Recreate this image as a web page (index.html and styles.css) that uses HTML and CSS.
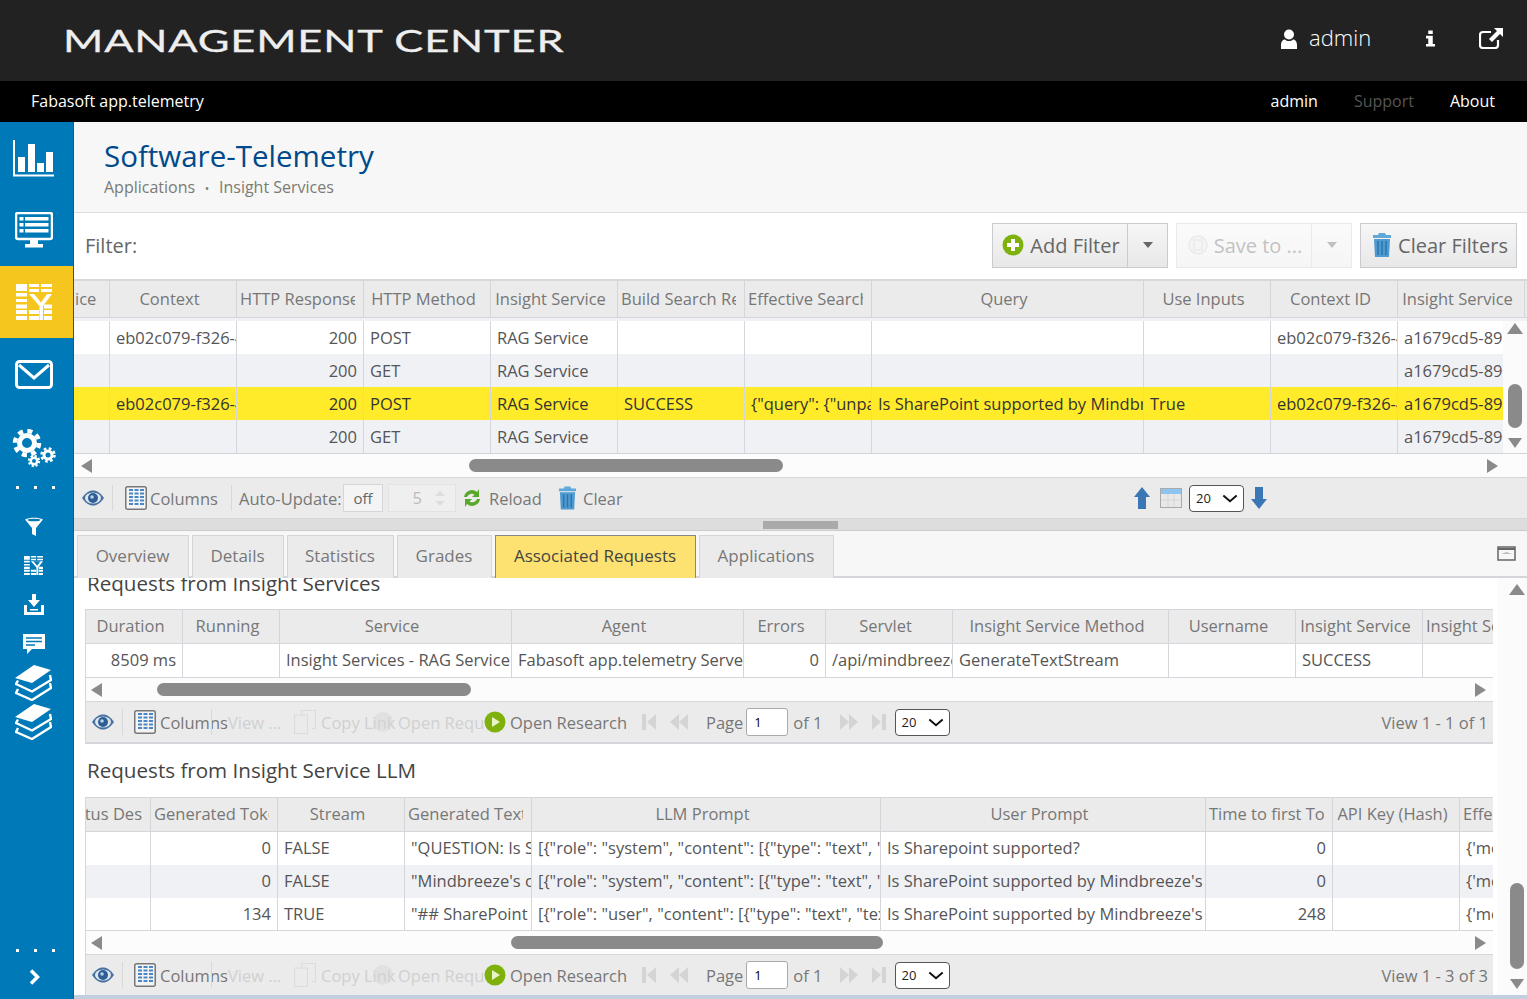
FILE: index.html
```html
<!DOCTYPE html>
<html lang="en">

<head>
    <meta charset="UTF-8">
    <title>Management Center</title>
    <link rel="stylesheet" href="styles.css">
</head>

<body>

    <!-- shared icons -->
    <svg class="defs" width="0" height="0">
        <symbol id="i-eye" viewBox="0 0 22 16">
            <path d="M0 8C4 2 8 .5 11 .5S18 2 22 8c-4 6-8 7.500-11 7.500S4 14 0 8z" fill="#46719f" />
            <ellipse cx="11" cy="8" rx="8" ry="5.500" fill="#dfe6ee" />
            <circle cx="11" cy="8" r="5" fill="#2d5f96" />
            <circle cx="10" cy="7" r="1.800" fill="#b9d2ea" />
        </symbol>
        <symbol id="i-columns" viewBox="0 0 22 24">
            <rect x=".75" y=".75" width="20.500" height="22.500" rx="2" fill="#f4f4f4" stroke="#777" stroke-width="1.500" />
            <path d="M4 4h4M4 7.500h4M4 11h4M4 14.500h4M4 18h4M9.500 4h4M9.500 7.500h4M9.500 11h4M9.500 14.500h4M9.500 18h4M15 4h4M15 7.500h4M15 11h4M15 14.500h4M15 18h4" stroke="#4a86c5" stroke-width="2.200" />
        </symbol>
        <symbol id="i-trash" viewBox="0 0 20 24">
            <path d="M7 0h6l1 2h5v3H1V2h5z" fill="#5fa8d8" />
            <path d="M2 6h16l-1 18H3z" fill="#4f9ad0" />
            <path d="M6 8v14M10 8v14M14 8v14" stroke="#2c76ad" stroke-width="1.500" />
        </symbol>
        <symbol id="i-copy" viewBox="0 0 22 24">
            <path d="M7.500 4V.5h14v18H18M.5 5h13v18.500H.5z" fill="none" stroke="#dcdcdc" stroke-width="1.200" />
        </symbol>
        <symbol id="i-play" viewBox="0 0 22 22">
            <circle cx="11" cy="11" r="10.500" fill="#7fb10d" />
            <path d="M8 6l8 5-8 5z" fill="#e8f3c8" />
        </symbol>
        <symbol id="i-first" viewBox="0 0 14 16">
            <path d="M0 0h4v16H0zM14 0v16L5 8z" fill="#d4d4d4" />
        </symbol>
        <symbol id="i-prev" viewBox="0 0 18 16">
            <path d="M9 0v16L0 8zM18 0v16L9 8z" fill="#d4d4d4" />
        </symbol>
        <symbol id="i-next" viewBox="0 0 18 16">
            <path d="M0 0v16l9-8zM9 0v16l9-8z" fill="#d4d4d4" />
        </symbol>
        <symbol id="i-last" viewBox="0 0 14 16">
            <path d="M0 0v16l9-8zM10 0h4v16h-4z" fill="#d4d4d4" />
        </symbol>
        <symbol id="i-stack" viewBox="0 0 37 36">
            <path d="M0 13L19 0l17 5L17 18z" fill="#fff" />
            <path d="M3 15.500L1 19l16 7.500L36 15l-1-5M3 24l-2 4 16 7 19-12-1-5" fill="none" stroke="#fff" stroke-width="2.400" stroke-linejoin="round" />
        </symbol>
        <symbol id="i-grid" viewBox="0 0 36 36">
            <path fill="#fff" d="M0 0h11v7H0zM13 0h10v3H13zM25 0h11v3H25zM13 5h10v3H13zM25 5h11v3H25zM0 9h11v3.500H0zM0 15h11v3H0zM0 20.500h11v4H0zM0 26h11v4H0zM0 32h11v4H0zM13 26h10v4H13zM13 32h10v4H13zM28 20.500h8v4h-8zM28 26h8v4h-8zM28 32h8v4h-8z" />
            <path fill="#fff" d="M13 10h23L27 22v14h-3.500V22z" />
            <path fill="currentColor" d="M18 10h13l-6 8.500z" />
        </symbol>
        <symbol id="i-chevron" viewBox="0 0 18 10">
            <path d="M1.500 1.500L9 8l7.500-6.500" fill="none" stroke="#111" stroke-width="2.200" />
        </symbol>
    </svg>

    <header class="topbar">
        <div class="logo">MANAGEMENT CENTER</div>
        <div class="top-user">
            <svg class="ic-user" viewBox="0 0 16 20">
                <circle cx="8" cy="5.500" r="5" fill="#fff" />
                <path d="M0 20v-4c0-3.500 2-5.500 4-5.500 1 1 2.500 1.500 4 1.500s3-.5 4-1.500c2 0 4 2 4 5.500v4z" fill="#fff" />
            </svg>
            <span class="top-name">admin</span>
            <svg class="ic-info" viewBox="0 0 10 18">
                <path d="M2.500 0h5v4h-5zM0 6h7.500v9H10v3H0v-3h2.500V9H0z" fill="#fff" />
            </svg>
            <svg class="ic-ext" viewBox="0 0 24 21">
                <path d="M19 12v5a3 3 0 0 1-3 3H4a3 3 0 0 1-3-3V7a3 3 0 0 1 3-3h8" fill="none" stroke="#fff" stroke-width="2.200" />
                <path d="M15 0h9v9l-3-3-8 8-3-3 8-8z" fill="#fff" />
            </svg>
        </div>
    </header>

    <nav class="navbar">
        <span class="nav-brand">Fabasoft app.telemetry</span>
        <div class="nav-links">
            <a>admin</a>
            <a class="muted">Support</a>
            <a>About</a>
        </div>
    </nav>

    <div class="layout">
        <aside class="sidebar">
            <div class="side-big">
                <svg width="42" height="37" viewBox="0 0 42 37">
                    <path d="M1 0v35.500h40" fill="none" stroke="#fff" stroke-width="2" />
                    <path d="M5 17h7v15H5zM15 4h7v28h-7zM24 23h7v9h-7zM33 12h7v20h-7z" fill="#fff" />
                </svg>
            </div>
            <div class="side-big">
                <svg width="38" height="36" viewBox="0 0 38 36">
                    <rect x="1" y="1" width="36" height="26" rx="2" fill="none" stroke="#fff" stroke-width="2.500" />
                    <path d="M4.500 5h4v3.500h-4zM10 5h23.500v3.500H10zM4.500 11h4v3.500h-4zM10 11h23.500v3.500H10zM4.500 17h4v3.500h-4zM10 17h23.500v3.500H10zM15 28h8v4h-8zM10 32h18v3.500H10z" fill="#fff" />
                </svg>
            </div>
            <div class="side-big active">
                <svg width="36" height="36"><use href="#i-grid" /></svg>
            </div>
            <div class="side-big">
                <svg width="38" height="29" viewBox="0 0 38 29">
                    <rect x="1.500" y="1.500" width="35" height="26" rx="3" fill="none" stroke="#fff" stroke-width="3" />
                    <path d="M4 5l15 13L34 5" fill="none" stroke="#fff" stroke-width="3" />
                </svg>
            </div>
            <div class="side-big side-gears">
                <svg width="46" height="42" viewBox="0 0 46 42">
                    <circle cx="15" cy="15" r="7.500" fill="none" stroke="#fff" stroke-width="5" />
                    <circle cx="15" cy="15" r="12" fill="none" stroke="#fff" stroke-width="4.500" stroke-dasharray="5 4.425" />
                    <circle cx="36" cy="27" r="4" fill="none" stroke="#fff" stroke-width="3" />
                    <circle cx="36" cy="27" r="6.500" fill="none" stroke="#fff" stroke-width="2.500" stroke-dasharray="2.700 2.400" />
                    <circle cx="22" cy="33" r="3.250" fill="none" stroke="#fff" stroke-width="2.500" />
                    <circle cx="22" cy="33" r="5.200" fill="none" stroke="#fff" stroke-width="2" stroke-dasharray="2.200 1.880" />
                </svg>
            </div>
            <div class="side-dots top"><i></i><i></i><i></i></div>
            <div class="side-small first">
                <svg width="20" height="20" viewBox="0 0 20 20">
                    <path d="M1 2.500C5 0 15 0 19 2.500L12 11v8l-4-2v-6z" fill="#fff" />
                    <ellipse cx="10" cy="3" rx="6.500" ry="1.300" fill="#0079b8" />
                </svg>
            </div>
            <div class="side-small side-grid">
                <svg width="19" height="19"><use href="#i-grid" /></svg>
            </div>
            <div class="side-small">
                <svg width="20" height="21" viewBox="0 0 20 21">
                    <path d="M8 0h4v6h4l-6 7-6-7h4z" fill="#fff" />
                    <path d="M0 11h3v7h14v-7h3v10H0z" fill="#fff" />
                    <path d="M6 15h8v1.500H6z" fill="#fff" />
                </svg>
            </div>
            <div class="side-small">
                <svg width="22" height="20" viewBox="0 0 22 20">
                    <path d="M0 0h22v15H9l-5 5v-5H0z" fill="#fff" />
                    <path d="M3 4h16M3 7.500h16M3 11h9" stroke="#0079b8" stroke-width="1.500" />
                </svg>
            </div>
            <div class="side-small">
                <svg width="37" height="36"><use href="#i-stack" /></svg>
            </div>
            <div class="side-small">
                <svg width="37" height="36"><use href="#i-stack" /></svg>
            </div>
            <div class="side-bottom">
                <div class="side-dots"><i></i><i></i><i></i></div>
                <svg class="side-chevron" width="12" height="16" viewBox="0 0 12 16">
                    <path d="M2 1.500L8.500 8 2 14.500" fill="none" stroke="#fff" stroke-width="3.500" />
                </svg>
            </div>
        </aside>

        <main class="main">
            <div class="page-head">
                <h1>Software-Telemetry</h1>
                <div class="crumbs">Applications <span class="sep">•</span> Insight Services</div>
            </div>

            <div class="filter-bar">
                <span class="filter-label">Filter:</span>
                <div class="btn-group add">
                    <button class="btn btn-main">
                        <svg width="22" height="22" viewBox="0 0 22 22">
                            <circle cx="11" cy="11" r="10.500" fill="#7fb10d" />
                            <path d="M9 5h4v4h4v4h-4v4H9v-4H5V9h4z" fill="#fff" />
                        </svg>
                        Add Filter
                    </button>
                    <button class="btn btn-caret"><i class="caret"></i></button>
                </div>
                <div class="btn-group save">
                    <button class="btn btn-main">
                        <svg width="20" height="20" viewBox="0 0 20 20">
                            <circle cx="10" cy="10" r="9" fill="#e8e8e8" stroke="#ccc" stroke-width="1.500" />
                            <path d="M6 5h8v10H6z" fill="none" stroke="#ccc" stroke-width="1.500" />
                        </svg>
                        Save to ...
                    </button>
                    <button class="btn btn-caret"><i class="caret"></i></button>
                </div>
                <div class="btn-group clear">
                    <button class="btn btn-main">
                        <svg width="20" height="24"><use href="#i-trash" /></svg>
                        Clear Filters
                    </button>
                </div>
            </div>

            <section class="grid grid-main">
                <div class="row head cols-main">
                    <div class="cell cut-left">ice</div>
                    <div class="cell">Context</div>
                    <div class="cell">HTTP Response Code</div>
                    <div class="cell">HTTP Method</div>
                    <div class="cell">Insight Service</div>
                    <div class="cell">Build Search Result</div>
                    <div class="cell">Effective Search Query</div>
                    <div class="cell">Query</div>
                    <div class="cell">Use Inputs</div>
                    <div class="cell">Context ID</div>
                    <div class="cell">Insight Service</div>
                </div>
                <div class="head-gap"></div>
                <div class="grid-body">
                    <div class="rows">
                        <div class="row cols-main">
                            <div class="cell"></div>
                            <div class="cell">eb02c079-f326-4a1b</div>
                            <div class="cell num">200</div>
                            <div class="cell">POST</div>
                            <div class="cell">RAG Service</div>
                            <div class="cell"></div>
                            <div class="cell"></div>
                            <div class="cell"></div>
                            <div class="cell"></div>
                            <div class="cell">eb02c079-f326-4a1b</div>
                            <div class="cell">a1679cd5-8921-44</div>
                        </div>
                        <div class="row alt cols-main">
                            <div class="cell"></div>
                            <div class="cell"></div>
                            <div class="cell num">200</div>
                            <div class="cell">GET</div>
                            <div class="cell">RAG Service</div>
                            <div class="cell"></div>
                            <div class="cell"></div>
                            <div class="cell"></div>
                            <div class="cell"></div>
                            <div class="cell"></div>
                            <div class="cell">a1679cd5-8921-44</div>
                        </div>
                        <div class="row selected cols-main">
                            <div class="cell"></div>
                            <div class="cell">eb02c079-f326-4a1b</div>
                            <div class="cell num">200</div>
                            <div class="cell">POST</div>
                            <div class="cell">RAG Service</div>
                            <div class="cell">SUCCESS</div>
                            <div class="cell">{"query": {"unparsed"</div>
                            <div class="cell">Is SharePoint supported by Mindbreeze's</div>
                            <div class="cell">True</div>
                            <div class="cell">eb02c079-f326-4a1b</div>
                            <div class="cell">a1679cd5-8921-44</div>
                        </div>
                        <div class="row alt cols-main">
                            <div class="cell"></div>
                            <div class="cell"></div>
                            <div class="cell num">200</div>
                            <div class="cell">GET</div>
                            <div class="cell">RAG Service</div>
                            <div class="cell"></div>
                            <div class="cell"></div>
                            <div class="cell"></div>
                            <div class="cell"></div>
                            <div class="cell"></div>
                            <div class="cell">a1679cd5-8921-44</div>
                        </div>
                    </div>
                    <div class="vscroll">
                        <i class="arrow-up"></i>
                        <i class="vthumb"></i>
                        <i class="arrow-down"></i>
                    </div>
                </div>
                <div class="hscroll">
                    <i class="arrow-left"></i>
                    <i class="hthumb"></i>
                    <i class="arrow-right"></i>
                </div>
                <div class="toolbar">
                    <svg class="tb-eye" width="22" height="16"><use href="#i-eye" /></svg>
                    <i class="tb-sep"></i>
                    <svg class="tb-cols" width="22" height="24"><use href="#i-columns" /></svg>
                    <span class="tb-text tb-colname">Columns</span>
                    <i class="tb-sep sep-auto"></i>
                    <span class="tb-text tb-auto">Auto-Update:</span>
                    <span class="off-box">off</span>
                    <span class="spin-box"><span class="spin-val">5</span><span class="spin-btns"><i class="spin-up"></i><i class="spin-down"></i></span></span>
                    <svg class="tb-reload" width="20" height="20" viewBox="0 0 20 20">
                        <path d="M2 9a8 8 0 0 1 13-5l2-3v8h-7l2.500-2.500A5 5 0 0 0 5 9z" fill="#58a82a" />
                        <path d="M18 11a8 8 0 0 1-13 5l-2 3v-8h7l-2.500 2.500A5 5 0 0 0 15 11z" fill="#58a82a" />
                    </svg>
                    <span class="tb-text tb-rel">Reload</span>
                    <svg class="tb-trash" width="19" height="24"><use href="#i-trash" /></svg>
                    <span class="tb-text tb-clear">Clear</span>
                    <svg class="tb-up" width="16" height="22" viewBox="0 0 16 22">
                        <path d="M8 0l8 10h-4v12H4V10H0z" fill="#3b77b5" />
                    </svg>
                    <svg class="tb-cal" width="22" height="20" viewBox="0 0 22 20">
                        <rect x=".5" y=".5" width="21" height="19" fill="#e8e8e8" stroke="#aaa" />
                        <rect x="1" y="1" width="20" height="5" fill="#8ec4f0" />
                        <path d="M8 6v13M14 6v13M1 12h20" stroke="#d6d6d6" />
                    </svg>
                    <div class="page-size"><span>20</span><svg width="16" height="9"><use href="#i-chevron" /></svg></div>
                    <svg class="tb-down" width="16" height="22" viewBox="0 0 16 22">
                        <path d="M4 0h8v12h4L8 22 0 12h4z" fill="#3b77b5" />
                    </svg>
                </div>
            </section>

            <div class="splitter"><i></i></div>

            <div class="tabs">
                <a class="tab t-over">Overview</a>
                <a class="tab t-det">Details</a>
                <a class="tab t-stat">Statistics</a>
                <a class="tab t-grad">Grades</a>
                <a class="tab t-assoc active">Associated Requests</a>
                <a class="tab t-apps">Applications</a>
                <svg class="tabs-max" width="19" height="15" viewBox="0 0 19 15">
                    <rect x="1" y="1" width="17" height="13" fill="#f7f7f7" stroke="#666" stroke-width="1.500" />
                    <path d="M1 2h17v2H1z" fill="#666" />
                    <path d="M4 8l5.500-2L15 8z" fill="#bbb" />
                </svg>
            </div>

            <div class="panel">
                <div class="panel-content">
                    <h2 class="sec-title first">Requests from Insight Services</h2>
                    <section class="grid grid-sub">
                        <div class="row head cols-req">
                            <div class="cell">Duration</div>
                            <div class="cell">Running</div>
                            <div class="cell">Service</div>
                            <div class="cell">Agent</div>
                            <div class="cell">Errors</div>
                            <div class="cell">Servlet</div>
                            <div class="cell">Insight Service Method</div>
                            <div class="cell">Username</div>
                            <div class="cell">Insight Service</div>
                            <div class="cell left">Insight Service Version</div>
                        </div>
                        <div class="row last cols-req">
                            <div class="cell num">8509 ms</div>
                            <div class="cell"></div>
                            <div class="cell">Insight Services - RAG Service</div>
                            <div class="cell">Fabasoft app.telemetry Server</div>
                            <div class="cell num">0</div>
                            <div class="cell">/api/mindbreeze/rag</div>
                            <div class="cell">GenerateTextStream</div>
                            <div class="cell"></div>
                            <div class="cell">SUCCESS</div>
                            <div class="cell"></div>
                        </div>
                        <div class="hscroll">
                            <i class="arrow-left"></i>
                            <i class="hthumb thumb-req"></i>
                            <i class="arrow-right"></i>
                        </div>
                        <div class="toolbar pager">
                            <svg class="tb-eye" width="22" height="16"><use href="#i-eye" /></svg>
                            <i class="tb-sep"></i>
                            <svg class="tb-cols" width="22" height="24"><use href="#i-columns" /></svg>
                            <span class="tb-text w-columns">Columns</span>
                            <i class="tb-sep sep-ghost"></i>
                            <span class="tb-text dis w-view">View ...</span>
                            <svg class="pg-copy" width="22" height="24"><use href="#i-copy" /></svg>
                            <span class="tb-text dis w-copy">Copy Link</span>
                            <i class="pg-ghost"></i>
                            <span class="tb-text dis w-open">Open Requ</span>
                            <svg class="pg-play" width="22" height="22"><use href="#i-play" /></svg>
                            <span class="tb-text w-research">Open Research</span>
                            <svg class="pg-first" width="14" height="16"><use href="#i-first" /></svg>
                            <svg class="pg-prev" width="18" height="16"><use href="#i-prev" /></svg>
                            <span class="tb-text pg-page">Page</span>
                            <input class="pg-input" type="text" value="1">
                            <span class="tb-text">of 1</span>
                            <svg class="pg-next" width="18" height="16"><use href="#i-next" /></svg>
                            <svg class="pg-last" width="14" height="16"><use href="#i-last" /></svg>
                            <div class="page-size pg-size"><span>20</span><svg width="16" height="9"><use href="#i-chevron" /></svg></div>
                            <span class="tb-text pg-view">View 1 - 1 of 1</span>
                        </div>
                    </section>

                    <h2 class="sec-title">Requests from Insight Service LLM</h2>
                    <section class="grid grid-sub">
                        <div class="row head cols-llm">
                            <div class="cell clip-right">Status Des</div>
                            <div class="cell">Generated Tokens</div>
                            <div class="cell">Stream</div>
                            <div class="cell">Generated Text</div>
                            <div class="cell">LLM Prompt</div>
                            <div class="cell">User Prompt</div>
                            <div class="cell">Time to first Token</div>
                            <div class="cell">API Key (Hash)</div>
                            <div class="cell left">Effective</div>
                        </div>
                        <div class="row cols-llm">
                            <div class="cell"></div>
                            <div class="cell num">0</div>
                            <div class="cell">FALSE</div>
                            <div class="cell">"QUESTION: Is SharePoint</div>
                            <div class="cell">[{"role": "system", "content": [{"type": "text", "text"</div>
                            <div class="cell">Is Sharepoint supported?</div>
                            <div class="cell num">0</div>
                            <div class="cell"></div>
                            <div class="cell">{'model'</div>
                        </div>
                        <div class="row alt cols-llm">
                            <div class="cell"></div>
                            <div class="cell num">0</div>
                            <div class="cell">FALSE</div>
                            <div class="cell">"Mindbreeze's connector</div>
                            <div class="cell">[{"role": "system", "content": [{"type": "text", "text"</div>
                            <div class="cell">Is SharePoint supported by Mindbreeze's</div>
                            <div class="cell num">0</div>
                            <div class="cell"></div>
                            <div class="cell">{'model'</div>
                        </div>
                        <div class="row last cols-llm">
                            <div class="cell"></div>
                            <div class="cell num">134</div>
                            <div class="cell">TRUE</div>
                            <div class="cell">"## SharePoint</div>
                            <div class="cell">[{"role": "user", "content": [{"type": "text", "text"</div>
                            <div class="cell">Is SharePoint supported by Mindbreeze's</div>
                            <div class="cell num">248</div>
                            <div class="cell"></div>
                            <div class="cell">{'model'</div>
                        </div>
                        <div class="hscroll">
                            <i class="arrow-left"></i>
                            <i class="hthumb thumb-llm"></i>
                            <i class="arrow-right"></i>
                        </div>
                        <div class="toolbar pager">
                            <svg class="tb-eye" width="22" height="16"><use href="#i-eye" /></svg>
                            <i class="tb-sep"></i>
                            <svg class="tb-cols" width="22" height="24"><use href="#i-columns" /></svg>
                            <span class="tb-text w-columns">Columns</span>
                            <i class="tb-sep sep-ghost"></i>
                            <span class="tb-text dis w-view">View ...</span>
                            <svg class="pg-copy" width="22" height="24"><use href="#i-copy" /></svg>
                            <span class="tb-text dis w-copy">Copy Link</span>
                            <i class="pg-ghost"></i>
                            <span class="tb-text dis w-open">Open Requ</span>
                            <svg class="pg-play" width="22" height="22"><use href="#i-play" /></svg>
                            <span class="tb-text w-research">Open Research</span>
                            <svg class="pg-first" width="14" height="16"><use href="#i-first" /></svg>
                            <svg class="pg-prev" width="18" height="16"><use href="#i-prev" /></svg>
                            <span class="tb-text pg-page">Page</span>
                            <input class="pg-input" type="text" value="1">
                            <span class="tb-text">of 1</span>
                            <svg class="pg-next" width="18" height="16"><use href="#i-next" /></svg>
                            <svg class="pg-last" width="14" height="16"><use href="#i-last" /></svg>
                            <div class="page-size pg-size"><span>20</span><svg width="16" height="9"><use href="#i-chevron" /></svg></div>
                            <span class="tb-text pg-view">View 1 - 3 of 3</span>
                        </div>
                    </section>
                </div>
                <div class="vscroll panel-scroll">
                    <i class="arrow-up"></i>
                    <i class="vthumb"></i>
                    <i class="arrow-down"></i>
                </div>
            </div>
            <div class="bottom-strip"></div>
        </main>
    </div>

</body>

</html>
```

FILE: styles.css
```css
/* Global Styles */
* {
    box-sizing: border-box;
}

body {
    margin: 0;
    height: 999px;
    overflow: hidden;
    font-family: 'Open Sans', sans-serif;
    font-size: 16.5px;
    color: #555;
    background-color: #fff;
}

.defs {
    display: block;
    height: 0;
}

i {
    display: block;
}

/* Top bars */
.topbar {
    height: 81px;
    background-color: #222;
    display: flex;
    align-items: center;
    justify-content: space-between;
    color: #fff;
}

.logo {
    margin-left: 63px;
    font-family: 'Lato', sans-serif;
    font-size: 31px;
    line-height: 1;
    letter-spacing: 0.6px;
    white-space: nowrap;
    transform: scaleX(1.4);
    transform-origin: left center;
    color: #eee;
    -webkit-text-stroke: 0.3px #eee;
}

.top-user {
    display: flex;
    align-items: center;
    margin-bottom: 4px;
}

.ic-user {
    width: 16px;
    height: 20px;
    margin-right: 12px;
    margin-left: 1px;
}

.top-name {
    font-size: 22px;
    font-weight: 300;
    width: 62px;
    line-height: 30px;
    margin-top: -4px;
}

.ic-info {
    width: 9px;
    height: 17px;
    margin-left: 55px;
}

.ic-ext {
    width: 24px;
    height: 21px;
    margin-left: 44px;
    margin-right: 24px;
}

.navbar {
    height: 41px;
    background-color: #000;
    color: #fff;
    display: flex;
    align-items: center;
    justify-content: space-between;
    padding: 0 32px 2px 31px;
    font-size: 16px;
}

.nav-links {
    display: flex;
    gap: 36px;
}

.nav-links .muted {
    color: #555;
}

/* Sidebar */
.layout {
    display: flex;
    height: 877px;
}

.sidebar {
    width: 74px;
    flex: none;
    background-color: #0079b8;
    border-right: 1px solid #0a5d8c;
    display: flex;
    flex-direction: column;
    color: #0079b8;
}

.side-big {
    height: 72px;
    flex: none;
    display: flex;
    align-items: center;
    justify-content: center;
    padding-right: 6px;
}

.side-big.active {
    background-color: #f5c71e;
    color: #f5c71e;
}

.side-gears {
    padding-top: 6px;
    padding-right: 3px;
}

.side-dots {
    display: flex;
    justify-content: center;
    gap: 15px;
    padding-right: 2px;
}

.side-dots.top {
    margin-top: 4px;
}

.side-dots i {
    width: 3px;
    height: 3px;
    background-color: #fff;
}

.side-small {
    height: 39px;
    flex: none;
    display: flex;
    align-items: center;
    justify-content: center;
    padding-right: 6px;
}

.side-small.first {
    margin-top: 18px;
}

.side-bottom {
    margin-top: auto;
    padding-bottom: 14px;
    display: flex;
    flex-direction: column;
    align-items: center;
}

.side-chevron {
    margin-top: 17px;
    margin-right: 4px;
}

/* Page head */
.main {
    flex: 1;
    min-width: 0;
    display: flex;
    flex-direction: column;
}

.page-head {
    height: 91px;
    background-color: #f7f7f7;
    border-bottom: 1px solid #ddd;
    padding: 12px 0 0 30px;
}

.page-head h1 {
    margin: 0;
    font-size: 29.5px;
    font-weight: 400;
    line-height: 44px;
    color: #00498a;
}

.crumbs {
    font-size: 16px;
    line-height: 18px;
    color: #7b7b73;
}

.crumbs .sep {
    font-size: 12px;
    margin: 0 5.500px;
}

/* Filter row */
.filter-bar {
    height: 66px;
    display: flex;
    align-items: center;
    padding: 0 10px 0 11px;
    gap: 8px;
}

.filter-label {
    font-size: 20px;
    line-height: 26px;
    margin-bottom: 1px;
    color: #666;
    margin-right: auto;
}

.btn-group {
    display: flex;
    height: 45px;
    margin-top: -2px;
}

.btn {
    font-family: inherit;
    font-size: 20px;
    color: #666;
    white-space: nowrap;
    border: 1px solid #c9cbd0;
    background: linear-gradient(#f6f6f6, #e8e8e8);
    display: flex;
    align-items: center;
    justify-content: center;
    gap: 6px;
    padding: 0;
}

.btn-main {
    width: 136px;
    padding-left: 2px;
}

.btn-caret {
    width: 40px;
    border-left: 0;
}

.save .btn {
    opacity: 0.4;
}

.clear .btn-main {
    width: 157px;
    padding-left: 3px;
}

.caret {
    width: 0;
    height: 0;
    border-left: 5.500px solid transparent;
    border-right: 5.500px solid transparent;
    border-top: 6px solid #666;
}

/* Grids */
.grid {
    overflow: hidden;
}

.grid-main {
    border-top: 2px solid #d8d8d8;
}

.grid-sub {
    width: 1408px;
    border: 1px solid #d5d6dc;
    border-right: 0;
}

.row {
    display: grid;
    height: 33px;
    line-height: 32px;
    white-space: nowrap;
}

.cols-main {
    grid-template-columns: 36px 127px 127px 127px 127px 127px 127px 272px 127px 127px 127px;
}

.cols-req {
    grid-template-columns: 97px 97px 232px 232px 82px 127px 216px 127px 127px 127px;
}

.cols-llm {
    grid-template-columns: 65px 127px 127px 127px 349px 325px 127px 127px 127px;
}

.cell {
    overflow: hidden;
    border-right: 1px solid #d5d6dc;
    padding: 0 6px;
    color: #555;
}

.cell.num {
    text-align: right;
}

.row.head {
    height: 34px;
    background-color: #ebebeb;
    border-bottom: 1px solid #d5d6dc;
}

.grid-main .row.head {
    height: 37px;
    line-height: 36px;
}

/* wide right border so long titles are cut before the column line */
.row.head .cell {
    text-align: center;
    padding: 0 2px 0 3px;
    color: #777;
    border-right: 9px solid #ebebeb;
    border-image: linear-gradient(to left, #d5d6dc 1px, #ebebeb 1px) 0 9 0 0;
}

.row.head .cell.left {
    text-align: left;
}

.row.head .cell.cut-left {
    text-align: left;
    padding: 0 0 0 1px;
}

.row.head .cell.clip-right {
    direction: rtl;
    text-align: right;
    padding: 0;
}

.row.alt {
    background-color: #f0f1f5;
}

.row.selected {
    background-color: #ffeb2a;
}

.row.selected .cell {
    color: #333;
}

.row.last {
    height: 34px;
    border-bottom: 1px solid #d5d6dc;
}

.row.last.cols-llm {
    height: 33px;
}

.head-gap {
    height: 3px;
    background-color: #f0f1f5;
}

.grid-body {
    display: flex;
    height: 133px;
    border-bottom: 1px solid #d5d6dc;
}

.rows {
    flex: 1;
    min-width: 0;
    overflow: hidden;
}

.rows .row {
    width: 1451px;
    line-height: 34px;
}

.vscroll {
    width: 24px;
    flex: none;
    background-color: #fbfbfb;
    display: flex;
    flex-direction: column;
    align-items: center;
    padding-top: 2px;
}

.vthumb {
    width: 14px;
    height: 44px;
    margin-top: 50px;
    background-color: #8a8a8a;
    border-radius: 7px;
}

.arrow-up,
.arrow-down,
.arrow-left,
.arrow-right {
    width: 0;
    height: 0;
    flex: none;
}

.arrow-up {
    border-left: 8px solid transparent;
    border-right: 8px solid transparent;
    border-bottom: 11px solid #8a8a8a;
}

.arrow-down {
    margin-top: 10px;
    border-left: 7px solid transparent;
    border-right: 7px solid transparent;
    border-top: 10px solid #8a8a8a;
}

.arrow-left {
    border-top: 7px solid transparent;
    border-bottom: 7px solid transparent;
    border-right: 11px solid #8a8a8a;
}

.arrow-right {
    margin-left: auto;
    border-top: 7px solid transparent;
    border-bottom: 7px solid transparent;
    border-left: 11px solid #8a8a8a;
}

.hscroll {
    height: 24px;
    background-color: #fcfcfc;
    border-bottom: 1px solid #d5d6dc;
    display: flex;
    align-items: center;
    padding: 0 29px 0 7px;
}

.hthumb {
    height: 13px;
    width: 314px;
    margin-left: 377px;
    background-color: #8a8a8a;
    border-radius: 7px;
}

.grid-sub .hscroll {
    padding: 0 7px 0 5px;
}

.thumb-req {
    margin-left: 55px;
}

.thumb-llm {
    width: 372px;
    margin-left: 409px;
}

/* Toolbars */
.toolbar {
    height: 41px;
    background-color: #ebebeb;
    border-bottom: 1px solid #d5d6dc;
    display: flex;
    align-items: center;
    padding-left: 8px;
    white-space: nowrap;
}

.toolbar svg {
    flex: none;
}

.tb-text {
    color: #777;
}

.tb-sep {
    width: 1px;
    height: 26px;
    margin: 0 12px 0 8px;
    background-color: #d8d8d8;
}

.tb-cols {
    margin-right: 4px;
}

.tb-colname {
    width: 69px;
    margin-left: -1px;
}

.sep-auto {
    margin: 0 7px 0 12px;
}

.tb-auto {
    width: 102px;
}

.off-box {
    width: 40px;
    height: 28px;
    margin-left: 2px;
    border: 1px solid #d5d6dc;
    background-color: #f4f4f4;
    text-align: center;
    line-height: 26px;
    font-size: 15px;
    color: #666;
}

.spin-box {
    width: 68px;
    height: 28px;
    margin-left: 5px;
    border: 1px solid #e2e2e2;
    display: flex;
    color: #bbb;
    background-color: #efefef;
}

.spin-val {
    width: 36px;
    text-align: right;
    line-height: 26px;
    padding-right: 3px;
}

.spin-btns {
    flex: 1;
    display: flex;
    flex-direction: column;
    align-items: center;
    justify-content: center;
    gap: 5px;
}

.spin-up,
.spin-down {
    width: 0;
    height: 0;
    border-left: 5px solid transparent;
    border-right: 5px solid transparent;
}

.spin-up {
    border-bottom: 5px solid #ddd;
}

.spin-down {
    border-top: 5px solid #ddd;
}

.tb-reload {
    margin: 0 7px 0 6px;
}

.tb-rel {
    width: 52px;
}

.tb-trash {
    margin: 0 6px 0 17px;
}

.tb-clear {
    width: 39px;
}

.tb-up {
    margin-left: 512px;
}

.tb-cal {
    margin: 0 7px 0 10px;
}

.page-size {
    width: 55px;
    height: 27px;
    flex: none;
    padding: 0 5px 0 6px;
    font-size: 13px;
    color: #222;
    background-color: #fff;
    border: 1px solid #555;
    border-radius: 4px;
    display: flex;
    align-items: center;
    justify-content: space-between;
}

.tb-down {
    margin-left: 7px;
}

.pager {
    padding-left: 6px;
}

.pager .tb-sep {
    margin-right: 11px;
}

.pager .tb-sep.sep-ghost {
    margin: 0 16px 0 0;
    flex: none;
}

.w-columns {
    width: 51px;
    flex: none;
}

.dis {
    color: #d0d0d0;
}

.w-view {
    width: 66px;
    flex: none;
}

.w-copy {
    width: 77px;
    flex: none;
}

.w-open {
    width: 86px;
    flex: none;
}

.w-research {
    width: 117px;
    flex: none;
}

.pg-copy {
    margin-right: 5px;
}

.pg-ghost {
    width: 20px;
    height: 20px;
    flex: none;
    margin: 0 5px 0 -25px;
    border-radius: 50%;
    background-color: #d4d4d4;
    opacity: 0.45;
}

.pg-play {
    margin-right: 4px;
}

.pg-first {
    margin-left: 15px;
}

.pg-prev {
    margin-left: 14px;
}

.pg-page {
    margin-left: 18px;
}

.pg-input {
    width: 42px;
    height: 28px;
    margin: 0 5px 0 3px;
    padding: 0 7px;
    font-family: inherit;
    font-size: 13px;
    border: 1px solid #aaa;
    border-radius: 3px;
    background-color: #fff;
}

.pg-next {
    margin-left: 17px;
}

.pg-last {
    margin-left: 14px;
}

.pg-size {
    margin-left: 9px;
}

.pg-view {
    margin-left: auto;
    margin-right: 5px;
}

/* Splitter and tabs */
.splitter {
    height: 12px;
    background-color: #ddd;
    border-bottom: 1px solid #ccc;
    display: flex;
    justify-content: center;
}

.splitter i {
    width: 75px;
    height: 8px;
    margin-top: 2px;
    background-color: #aaa;
}

.tabs {
    height: 47px;
    background-color: #f7f7f7;
    border-bottom: 2px solid #d5d6dc;
    display: flex;
    align-items: flex-end;
    padding-left: 3px;
    gap: 3px;
    flex: none;
}

.tab {
    height: 43px;
    margin-bottom: -2px;
    padding: 8px 1px 0 0;
    font-size: 17px;
    text-align: center;
    background-color: #ebebeb;
    border: 1px solid #d5d6dc;
    border-bottom: 0;
    color: #777;
}

.t-over { width: 112px; }
.t-det { width: 92px; }
.t-stat { width: 107px; }
.t-grad { width: 95px; }
.t-assoc { width: 201px; }
.t-apps { width: 135px; }

.tab.active {
    background-color: #fde272;
    border-color: #888;
    color: #444;
}

.tabs-max {
    margin-left: auto;
    margin-right: 11px;
    margin-bottom: 15px;
}

/* Lower panel */
.panel {
    flex: 1;
    min-height: 0;
    display: flex;
    overflow: hidden;
}

.panel-content {
    width: 1423px;
    flex: none;
    padding-left: 11px;
}

.sec-title {
    margin: 12px 0 13px 2px;
    font-size: 20.600px;
    font-weight: 400;
    line-height: 28px;
    color: #444;
}

.sec-title.first {
    margin-top: -9px;
    margin-bottom: 12px;
}

.panel-scroll {
    width: 30px;
    padding-top: 6px;
    padding-left: 10px;
}

.panel-scroll .vthumb {
    margin-top: 288px;
    height: 86px;
}

.bottom-strip {
    height: 4px;
    flex: none;
    background-color: #c3cfde;
}
```
